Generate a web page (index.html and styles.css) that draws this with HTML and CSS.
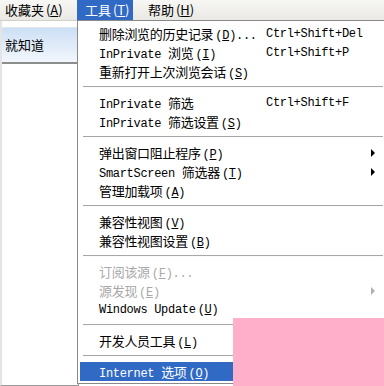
FILE: index.html
```html
<!DOCTYPE html>
<html lang="zh-CN">
<head>
  <meta charset="UTF-8" />
  <title>工具菜单</title>
  <link rel="stylesheet" href="styles.css">
</head>
<body>

  <!-- Barra de menú -->
  <div class="menubar">
    <span class="top-item primero">收藏夹 (<u>A</u>)</span>
    <span class="top-item activo">工具 (<u>T</u>)</span>
    <span class="top-item">帮助 (<u>H</u>)</span>
  </div>

  <div class="ventana">
    <div class="lateral">
      <div class="pestana">就知道</div>
    </div>
    <div class="pagina"></div>
  </div>

  <!-- Menú desplegable -->
  <div class="menu">
    <div class="item"><span class="txt"><span class="zh">删除浏览的历史记录</span>(<u>D</u>)...</span><span class="atajo">Ctrl+Shift+Del</span></div>
    <div class="item"><span class="txt">InPrivate <span class="zh">浏览</span>(<u>I</u>)</span><span class="atajo">Ctrl+Shift+P</span></div>
    <div class="item"><span class="txt"><span class="zh">重新打开上次浏览会话</span>(<u>S</u>)</span></div>
    <div class="sep"></div>
    <div class="item"><span class="txt">InPrivate <span class="zh">筛选</span></span><span class="atajo">Ctrl+Shift+F</span></div>
    <div class="item"><span class="txt">InPrivate <span class="zh">筛选设置</span>(<u>S</u>)</span></div>
    <div class="sep"></div>
    <div class="item"><span class="txt"><span class="zh">弹出窗口阻止程序</span>(<u>P</u>)</span><span class="flecha"></span></div>
    <div class="item"><span class="txt">SmartScreen <span class="zh">筛选器</span>(<u>T</u>)</span><span class="flecha"></span></div>
    <div class="item"><span class="txt"><span class="zh">管理加载项</span>(<u>A</u>)</span></div>
    <div class="sep"></div>
    <div class="item"><span class="txt"><span class="zh">兼容性视图</span>(<u>V</u>)</span></div>
    <div class="item"><span class="txt"><span class="zh">兼容性视图设置</span>(<u>B</u>)</span></div>
    <div class="sep"></div>
    <div class="item gris"><span class="txt"><span class="zh">订阅该源</span>(<u>F</u>)...</span></div>
    <div class="item gris"><span class="txt"><span class="zh">源发现</span>(<u>E</u>)</span><span class="flecha"></span></div>
    <div class="item"><span class="txt">Windows Update<span class="hueco"></span>(<u>U</u>)</span></div>
    <div class="sep"></div>
    <div class="item"><span class="txt"><span class="zh">开发人员工具</span>(<u>L</u>)</span></div>
    <div class="sep"></div>
    <div class="item activo"><span class="txt">Internet <span class="zh">选项</span>(<u>O</u>)</span></div>
  </div>

  <div class="marca"></div>

</body>
</html>
```

FILE: styles.css
```css
body {
  margin: 0;
  width: 384px;
  height: 386px;
  overflow: hidden;
  background-color: #fff;
  font-family: 'Liberation Mono', 'Noto Sans CJK SC', monospace;
  color: #000;
  position: relative;
}

u {
  text-decoration: underline;
}

.zh {
  font-family: 'Noto Sans CJK SC', sans-serif;
  font-size: 13px;
  margin-right: 2px;
}

.hueco {
  display: inline-block;
  width: 2px;
}

/* barra superior */
.menubar {
  height: 20px;
  display: flex;
  align-items: center;
  background: linear-gradient(#f7f7f5, #e9e8e3);
  border-bottom: 1px solid #d0cfc8;
  font-family: 'Noto Sans CJK SC', sans-serif;
  font-size: 13px;
}

.top-item {
  height: 20px;
  line-height: 20px;
  white-space: nowrap;
  box-sizing: border-box;
  word-spacing: -1px;
}

.top-item.primero {
  width: 77px;
  padding-left: 5px;
}

.top-item.activo {
  background-color: #316ac5;
  color: #fff;
  width: 56px;
  padding-left: 8px;
  margin-right: 15px;
}

.ventana {
  display: flex;
  height: 365px;
}

.lateral {
  width: 76px;
  border-left: 2px solid #e4e4e4;
  border-right: 1px solid #8c8c8c;
  border-bottom: 1px solid #9a9a9a;
  padding-top: 6px;
  background-color: #fff;
}

.pestana {
  height: 34px;
  line-height: 34px;
  padding-left: 3px;
  background: linear-gradient(#cddff5, #f2f7fd);
  border-top: 1px solid #dfe6ee;
  border-bottom: 2px solid #8e8e8e;
  font-family: 'Noto Sans CJK SC', sans-serif;
  font-size: 13px;
}

.pagina {
  flex: 1;
}

/* menú */
.menu {
  position: absolute;
  left: 77px;
  top: 20px;
  width: 303px;
  padding: 3px 2px 2px 2px;
  background-color: #fff;
  border: 1px solid #8a8a8a;
  border-right-color: #777;
  font-size: 12px;
}

.item {
  height: 19px;
  display: flex;
  align-items: center;
  padding-left: 19px;
  position: relative;
}

.txt {
  width: 167px;
  white-space: nowrap;
  letter-spacing: -0.3px;
}

.atajo {
  white-space: nowrap;
  letter-spacing: -0.3px;
}

.gris {
  color: #a8a8a8;
}

.flecha {
  position: absolute;
  right: 8px;
  top: 6px;
  width: 0;
  height: 0;
  border-top: 4px solid transparent;
  border-bottom: 4px solid transparent;
  border-left: 4px solid #000;
}

.gris .flecha {
  border-left-color: #b0b0b0;
}

.item.activo {
  background-color: #316ac5;
  color: #fff;
}

.sep {
  height: 1px;
  background-color: #a7a7a7;
  border-bottom: 1px solid #fbfbfb;
  margin: 5px 0 5px 3px;
}

/* recuadro rosa */
.marca {
  position: absolute;
  left: 233px;
  top: 318px;
  width: 151px;
  height: 68px;
  background-color: #ffafc9;
}
```
